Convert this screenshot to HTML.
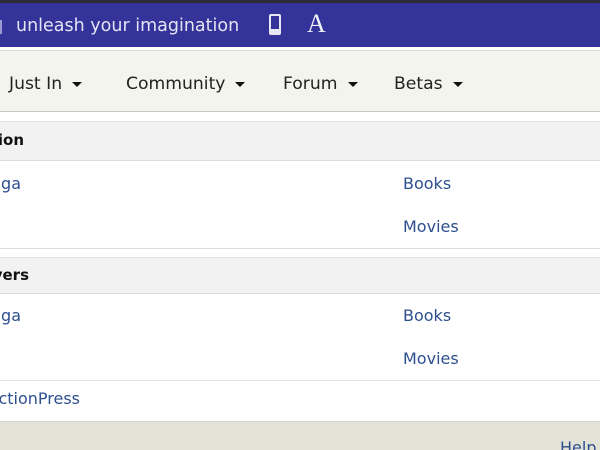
<!DOCTYPE html>
<html><head><style>
*{margin:0;padding:0;box-sizing:border-box}
html,body{width:600px;height:450px;overflow:hidden}
body{background:#fff;font-family:"DejaVu Sans",Verdana,sans-serif;position:relative}
.a{position:absolute;white-space:nowrap}
.r{position:absolute;white-space:nowrap;text-align:right}
.lk{color:#2d4f8e;font-size:16px}
.nav{font-size:17.2px;color:#222}
.car{display:inline-block;width:0;height:0;border-left:5.5px solid transparent;border-right:5.5px solid transparent;border-top:5.5px solid #111;margin-left:10px;vertical-align:middle}
.h{font-weight:bold;font-size:15px;color:#111}
</style></head><body>
<div class="a" style="left:0;top:0;width:600px;height:3px;background:#2a2a38"></div>
<div class="a" style="left:0;top:3px;width:600px;height:44px;background:#333399"></div>
<div class="a" style="left:0;top:20px;width:2px;height:14px;background:#9a9ad0"></div>
<div class="a" style="left:16px;top:16px;font-size:17.5px;color:#e4e4f4">unleash your imagination</div>
<div class="a" style="left:269px;top:14px;width:12px;height:21px;border:2px solid #e8e8f4;border-radius:2px"></div>
<div class="a" style="left:271px;top:29px;width:8px;height:4px;background:#e8e8f4"></div>
<div class="a" style="left:307px;top:9px;font-family:'Liberation Serif',serif;font-size:26px;color:#f0f0f8">A</div>
<div class="a" style="left:0;top:47px;width:600px;height:3px;background:#fff"></div>
<div class="a" style="left:0;top:50px;width:600px;height:62px;background:#f4f4ee;border-top:1px solid #dcdcd4;border-bottom:1px solid #c8c8c4"></div>
<div class="a nav" style="left:9px;top:74px">Just In<span class="car"></span></div>
<div class="a nav" style="left:126px;top:74px">Community<span class="car"></span></div>
<div class="a nav" style="left:283px;top:74px">Forum<span class="car"></span></div>
<div class="a nav" style="left:394px;top:74px">Betas<span class="car"></span></div>

<div class="a" style="left:0;top:121px;width:600px;height:40px;background:#f2f2f2;border-top:1px solid #e0e0e0;border-bottom:1px solid #dcdcdc"></div>
<div class="r h" style="right:576px;top:131px">Fiction</div>
<div class="r lk" style="right:579px;top:174px">Manga</div>
<div class="a lk" style="left:403px;top:174px">Books</div>
<div class="a lk" style="left:403px;top:217px">Movies</div>
<div class="a" style="left:0;top:248px;width:600px;height:1px;background:#dcdcdc"></div>

<div class="a" style="left:0;top:257px;width:600px;height:37px;background:#f2f2f2;border-top:1px solid #e0e0e0;border-bottom:1px solid #dcdcdc"></div>
<div class="r h" style="right:571px;top:266px">Crossovers</div>
<div class="r lk" style="right:579px;top:306px">Manga</div>
<div class="a lk" style="left:403px;top:306px">Books</div>
<div class="a lk" style="left:403px;top:349px">Movies</div>
<div class="a" style="left:0;top:380px;width:600px;height:1px;background:#e4e4e4"></div>
<div class="r lk" style="right:520px;top:389px">FictionPress</div>
<div class="a" style="left:0;top:421px;width:600px;height:29px;background:#e3e2d6;border-top:1px solid #d6d5c8"></div>
<div class="a lk" style="left:560px;top:438px">Help</div>
</body></html>
